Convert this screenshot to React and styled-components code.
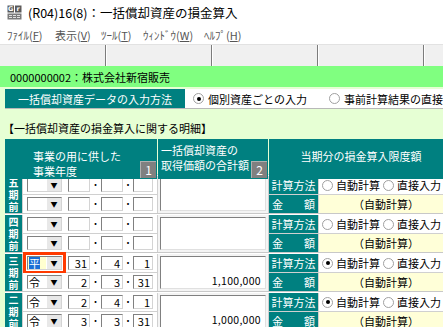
import React from "react";
import styled, { createGlobalStyle } from "styled-components";

const GlobalStyle = createGlobalStyle`
  html, body { margin: 0; padding: 0; background: #ffffff; }
  body { font-family: "Noto Sans CJK JP", "Liberation Sans", sans-serif; font-size: 11px; }
`;

const groups = [
  { label: "五期前", rows: [{ era: "", d: ["", "", ""] }, { era: "", d: ["", "", ""] }], amount: "", method: 0 },
  { label: "四期前", rows: [{ era: "", d: ["", "", ""] }, { era: "", d: ["", "", ""] }], amount: "", method: 0 },
  { label: "三期前", rows: [{ era: "平", d: ["31", "4", "1"], focus: true }, { era: "令", d: ["2", "3", "31"] }], amount: "1,100,000", method: 1 },
  { label: "二期前", rows: [{ era: "令", d: ["2", "4", "1"] }, { era: "令", d: ["3", "3", "31"] }], amount: "1,000,000", method: 1 },
];

export default function App() {
  return (
    <Window>
      <GlobalStyle />
      <TitleBar>
        <AppIcon />
        <span>(R04)16(8)：一括償却資産の損金算入</span>
      </TitleBar>
      <MenuBar>
        <MenuItem $w={48}>ﾌｧｲﾙ(<u>F</u>)</MenuItem>
        <MenuItem $w={46}>表示(<u>V</u>)</MenuItem>
        <MenuItem $w={42}>ﾂｰﾙ(<u>T</u>)</MenuItem>
        <MenuItem $w={61}>ｳｨﾝﾄﾞｳ(<u>W</u>)</MenuItem>
        <MenuItem $w={50}>ﾍﾙﾌﾟ(<u>H</u>)</MenuItem>
      </MenuBar>
      <Toolbar>
        <ToolSlot />
        <ToolSlot />
        <ToolSlot />
        <ToolSlot />
        <ToolSlot />
      </Toolbar>
      <CompanyBar>0000000002：株式会社新宿販売</CompanyBar>
      <Body>
        <MethodRow>
          <MethodLabel>一括償却資産データの入力方法</MethodLabel>
          <MethodOptions>
            <Option><Radio checked />個別資産ごとの入力</Option>
            <Option><Radio />事前計算結果の直接入力</Option>
          </MethodOptions>
        </MethodRow>
        <Heading>【一括償却資産の損金算入に関する明細】</Heading>
        <Table>
          <HeadRow>
            <HeadCell $pad="10px 0 0 28px">
              事業の用に供した<br />事業年度
              <Badge>1</Badge>
            </HeadCell>
            <HeadCell $pad="4px 0 0 3px">
              一括償却資産の<br />取得価額の合計額
              <Badge>2</Badge>
            </HeadCell>
            <HeadCell $pad="10px 22px 0 0" $center>
              当期分の損金算入限度額
              <Badge>4</Badge>
            </HeadCell>
          </HeadRow>
          {groups.map((g) => (
            <Group key={g.label}>
              <PeriodLabel>
                {g.label.split("").map((c, i) => (
                  <span key={i}>{c}</span>
                ))}
              </PeriodLabel>
              {g.rows.map((r, i) => (
                <DateCell key={i} style={{ gridRow: i + 1 }}>
                  <EraSelect $focus={r.focus}>
                    <EraText $focus={r.focus}>{r.focus ? <Selected>{r.era}</Selected> : r.era}</EraText>
                    <DropButton>▼</DropButton>
                  </EraSelect>
                  <NumBox $w={22}>{r.d[0]}</NumBox>
                  <Dot $w={11}>・</Dot>
                  <NumBox $w={22}>{r.d[1]}</NumBox>
                  <Dot $w={10}>・</Dot>
                  <NumBox $w={20}>{r.d[2]}</NumBox>
                </DateCell>
              ))}
              <AmountCell>
                <AmountBox>{g.amount}</AmountBox>
              </AmountCell>
              <SideLabel style={{ gridRow: 1 }}>計算方法</SideLabel>
              <SideLabel style={{ gridRow: 2 }} $spread>
                <span>金</span><span>額</span>
              </SideLabel>
              <MethodValue>
                <Choice><Radio checked={g.method === 1} />自動計算</Choice>
                <Choice><Radio />直接入力</Choice>
              </MethodValue>
              <AutoValue>（自動計算）</AutoValue>
            </Group>
          ))}
        </Table>
      </Body>
    </Window>
  );
}

const AppIcon = () => (
  <svg width="15" height="15" viewBox="0 0 15 15">
    <rect x="0" y="0" width="15" height="15" fill="#ffffff" />
    <rect x="0.5" y="0.5" width="6.5" height="7" fill="#5a5a5a" />
    <rect x="8" y="0.5" width="6.5" height="7" fill="#5a5a5a" />
    <text x="3.7" y="6.3" fontSize="6.5" fill="#fff" textAnchor="middle" fontFamily="DejaVu Sans" fontWeight="bold">G</text>
    <text x="11.2" y="6.3" fontSize="6.5" fill="#fff" textAnchor="middle" fontFamily="DejaVu Sans" fontWeight="bold">r</text>
    <rect x="0.5" y="8.5" width="14" height="6" fill="#7a7a7a" />
    <path d="M2 10h3v1H2zM6 10h3v1H6zM10 10h3v1h-3zM2 12h3v1H2zM6 12h3v1H6zM10 12h3v1h-3z" fill="#e0e0e0" />
  </svg>
);

const Window = styled.div`
  width: 443px;
  height: 327px;
  overflow: hidden;
  display: flex;
  flex-direction: column;
  background: #ffffff;
`;

const TitleBar = styled.div`
  height: 25px;
  flex-shrink: 0;
  display: flex;
  align-items: center;
  gap: 6px;
  padding-left: 7px;
  font-size: 12.5px;
  color: #000;
`;

const MenuBar = styled.div`
  height: 19px;
  flex-shrink: 0;
  display: flex;
  align-items: center;
  padding-left: 7px;
  font-size: 11px;
  color: #555;
  & u { text-decoration-thickness: 1px; text-underline-offset: 1px; }
`;

const MenuItem = styled.span`
  width: ${(p) => p.$w}px;
  white-space: nowrap;
`;

const Toolbar = styled.div`
  height: 22px;
  flex-shrink: 0;
  display: flex;
  background: #f0f0f0;
  border-top: 1px solid #e2e2e2;
  box-sizing: border-box;
`;

const ToolSlot = styled.div`
  width: 105px;
  flex-shrink: 0;
  border-right: 1px solid #7c7c7c;
  box-shadow: 1px 0 0 #ffffff;
`;

const CompanyBar = styled.div`
  height: 21px;
  flex-shrink: 0;
  display: flex;
  align-items: center;
  padding-left: 10px;
  background: #80ff80;
  font-size: 11px;
  color: #000;
`;

const Body = styled.div`
  flex: 1;
  background: #e6ffd4;
  padding: 2px 0 0 5px;
  display: flex;
  flex-direction: column;
`;

const MethodRow = styled.div`
  display: flex;
  height: 19px;
  width: 480px;
  border-bottom: 1px solid #b8b8b8;
`;

const MethodLabel = styled.div`
  width: 180px;
  flex-shrink: 0;
  background: #008080;
  color: #ffffff;
  display: flex;
  align-items: center;
  justify-content: center;
  font-size: 11px;
`;

const MethodOptions = styled.div`
  flex: 1;
  background: #ffffff;
  display: flex;
  align-items: center;
  gap: 22px;
  padding-left: 8px;
`;

const Option = styled.label`
  display: flex;
  align-items: center;
  gap: 4px;
  white-space: nowrap;
  font-size: 11px;
`;

const Radio = styled.span`
  width: 9px;
  height: 9px;
  border-radius: 50%;
  border: 1px solid #a0a0a0;
  background: #ffffff;
  flex-shrink: 0;
  display: inline-flex;
  align-items: center;
  justify-content: center;
  &::after {
    content: "";
    width: 4px;
    height: 4px;
    border-radius: 50%;
    background: ${(p) => (p.checked ? "#000" : "transparent")};
  }
`;

const Heading = styled.div`
  margin: 11px 0 0 -2px;
  height: 18px;
  font-size: 11px;
  color: #000;
`;

const Table = styled.div`
  margin-top: 1px;
  width: 470px;
  background: #c8c8c8;
  display: flex;
  flex-direction: column;
  gap: 1px;
`;

const HeadRow = styled.div`
  display: grid;
  grid-template-columns: 152px 110px 1fr;
  gap: 1px;
  height: 35px;
  background: #e6ffd4;
`;

const HeadCell = styled.div`
  position: relative;
  background: #008080;
  color: #ffffff;
  font-size: 11px;
  line-height: 15px;
  padding: ${(p) => p.$pad};
  text-align: ${(p) => (p.$center ? "center" : "left")};
`;

const Badge = styled.span`
  position: absolute;
  right: 1px;
  bottom: 1px;
  width: 15px;
  height: 16px;
  background: #808080;
  border-top: 1px solid #b0b0b0;
  border-left: 1px solid #b0b0b0;
  color: #ffffff;
  font-size: 12px;
  line-height: 16px;
  text-align: center;
`;

const Group = styled.div`
  display: grid;
  grid-template-columns: 17px 134px 110px 49px 1fr;
  grid-template-rows: 18px 18px;
  gap: 1px;
  background: #d0d0d0;
  border-top: 1px solid #ffffff;
`;

const PeriodLabel = styled.div`
  grid-row: 1 / span 2;
  grid-column: 1;
  background: #008080;
  color: #ffffff;
  font-size: 10px;
  line-height: 12px;
  font-weight: bold;
  display: flex;
  flex-direction: column;
  align-items: center;
  justify-content: center;
`;

const DateCell = styled.div`
  grid-column: 2;
  background: #ffffff;
  display: flex;
  align-items: center;
  padding-left: 4px;
`;

const EraSelect = styled.div`
  width: 35px;
  height: 14px;
  box-sizing: border-box;
  display: flex;
  border: 1px solid;
  border-color: #808080 #d4d4d4 #d4d4d4 #808080;
  margin-right: 6px;
  outline: ${(p) => (p.$focus ? "3px solid #ff3a00" : "none")};
  outline-offset: 1px;
`;

const EraText = styled.span`
  flex: 1;
  background: ${(p) => (p.$focus ? "#ffffd0" : "#ffffff")};
  font-size: 11px;
  line-height: 12px;
  padding-left: 1px;
  overflow: hidden;
`;

const Selected = styled.span`
  background: #1a6fd6;
  color: #ffffff;
`;

const DropButton = styled.span`
  width: 14px;
  background: #e8e8e8;
  border-left: 1px solid #ffffff;
  font-size: 7px;
  line-height: 12px;
  text-align: center;
  color: #000;
`;

const NumBox = styled.span`
  width: ${(p) => p.$w}px;
  height: 14px;
  box-sizing: border-box;
  border: 1px solid;
  border-color: #808080 #d4d4d4 #d4d4d4 #808080;
  font-size: 11px;
  line-height: 12px;
  text-align: right;
  padding-right: 2px;
`;

const Dot = styled.span`
  width: ${(p) => p.$w}px;
  font-size: 9px;
  text-align: center;
  line-height: 12px;
`;

const AmountCell = styled.div`
  grid-row: 1 / span 2;
  grid-column: 3;
  background: #f4f4f4;
  padding: 2px;
  display: flex;
`;

const AmountBox = styled.div`
  flex: 1;
  background: #ffffff;
  border: 1px solid;
  border-color: #808080 #e0e0e0 #e0e0e0 #808080;
  display: flex;
  align-items: flex-end;
  justify-content: flex-end;
  padding: 0 4px 1px 0;
  font-size: 10.5px;
  line-height: 12px;
  letter-spacing: 0.3px;
`;

const SideLabel = styled.div`
  grid-column: 4;
  background: #008080;
  color: #ffffff;
  font-size: 11px;
  display: flex;
  align-items: center;
  justify-content: ${(p) => (p.$spread ? "space-between" : "center")};
  padding: ${(p) => (p.$spread ? "0 3px 0 3px" : "0")};
`;

const MethodValue = styled.div`
  grid-column: 5;
  grid-row: 1;
  background: #ffffff;
  display: flex;
  align-items: center;
  gap: 3px;
  padding-left: 3px;
`;

const Choice = styled.span`
  display: flex;
  align-items: center;
  gap: 3px;
  font-size: 11px;
  white-space: nowrap;
`;

const AutoValue = styled.div`
  grid-column: 5;
  grid-row: 2;
  background: #ffffd8;
  display: flex;
  align-items: center;
  padding-left: 34px;
  font-size: 11px;
`;
